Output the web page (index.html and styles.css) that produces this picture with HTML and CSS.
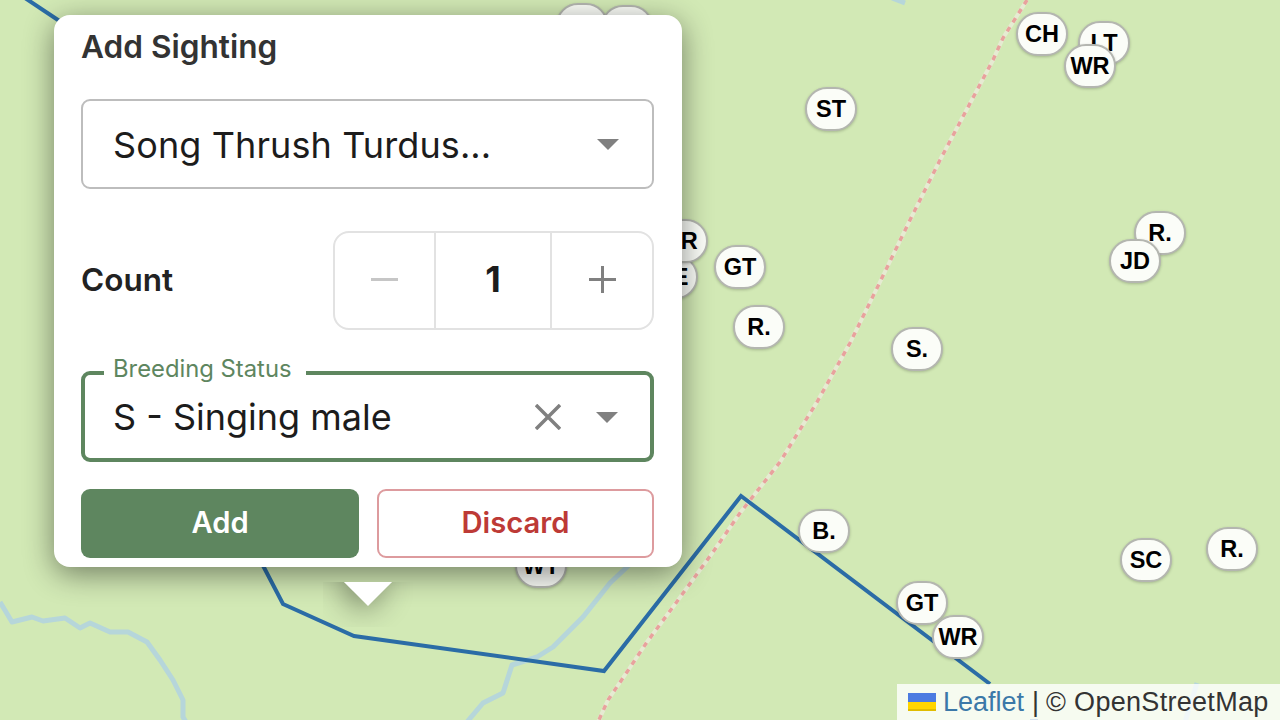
FILE: index.html
```html
<!DOCTYPE html>
<html lang="en">
<head>
<meta charset="utf-8">
<title>Add Sighting</title>
<link rel="stylesheet" href="styles.css">
</head>
<body>
<main class="map">
  <svg class="map-lines" viewBox="0 0 1280 720" width="1280" height="720" aria-hidden="true">
    <g class="water">
      <polyline points="0,602 12,622 32,617 43,621 65,618 80,628 90,623 110,632 128,632 147,642 160,660 173,680 183,700 183,717 186,722"/>
      <polyline points="650,545 627,567 610,583 583,617 553,647 537,657 512,665 503,693 483,703 467,722"/>
      <polyline points="1197,683 1185,722"/>
      <polyline points="892,-2 905,3"/>
    </g>
    <g class="track">
      <polyline class="track-base" points="1027,0 1003,38 993,60 940,160 910,220 880,282 850,343 817,402 780,462 740,513 713,552 673,607 647,642 627,672 608,700 598,722"/>
      <polyline class="track-dots" points="1027,0 1003,38 993,60 940,160 910,220 880,282 850,343 817,402 780,462 740,513 713,552 673,607 647,642 627,672 608,700 598,722"/>
    </g>
    <polyline class="route" points="25,-2 70,28"/>
    <polyline class="route" points="258,556 283,604 354,636 604,671 741,496 990,684"/>
    <polyline class="route" points="1030,721 1038,721"/>
  </svg>

  <span class="pin p-a">&nbsp;</span>
  <span class="pin p-b">&nbsp;</span>
  <span class="pin p-st">ST</span>
  <span class="pin p-ch">CH</span>
  <span class="pin p-lt">LT</span>
  <span class="pin p-wr1">WR</span>
  <span class="pin p-r1">R.</span>
  <span class="pin p-jd">JD</span>
  <span class="pin p-e">RE</span>
  <span class="pin p-r0">TR</span>
  <span class="pin p-gt1">GT</span>
  <span class="pin p-r2">R.</span>
  <span class="pin p-s">S.</span>
  <span class="pin p-b2">B.</span>
  <span class="pin p-gt2">GT</span>
  <span class="pin p-wr2">WR</span>
  <span class="pin p-sc">SC</span>
  <span class="pin p-r3">R.</span>
  <span class="pin p-wt">WT</span>

  <section class="popup">
    <h2 class="title">Add Sighting</h2>
    <div class="select">
      <span class="select-value">Song Thrush Turdus...</span>
      <svg class="caret" viewBox="0 0 22 11" width="22" height="11" aria-hidden="true"><path d="M0 0H22L11 11Z"/></svg>
    </div>
    <div class="count-row">
      <span class="count-label">Count</span>
      <div class="stepper">
        <button class="step step-minus" type="button" aria-label="Decrease">
          <svg viewBox="0 0 27 3" width="27" height="3" aria-hidden="true"><path class="glyph-off" d="M0 1.5H27"/></svg>
        </button>
        <span class="step-value">1</span>
        <button class="step step-plus" type="button" aria-label="Increase">
          <svg viewBox="0 0 27 27" width="27" height="27" aria-hidden="true"><path class="glyph-on" d="M0 13.5H27M13.5 0V27"/></svg>
        </button>
      </div>
    </div>
    <div class="select select-focus">
      <span class="float-label">Breeding Status</span>
      <span class="select-value">S - Singing male</span>
      <svg class="clear" viewBox="0 0 26 26" width="26" height="26" aria-hidden="true"><path d="M1 1L25 25M25 1L1 25"/></svg>
      <svg class="caret" viewBox="0 0 22 11" width="22" height="11" aria-hidden="true"><path d="M0 0H22L11 11Z"/></svg>
    </div>
    <div class="actions">
      <button class="btn btn-add" type="button">Add</button>
      <button class="btn btn-discard" type="button">Discard</button>
    </div>
  </section>
  <div class="tip-wrap"><div class="tip"></div></div>

  <footer class="attribution">
    <svg class="flag" viewBox="0 0 28 18" width="28" height="18" aria-hidden="true">
      <rect width="28" height="9" fill="#4c7be1"/><rect y="9" width="28" height="7" fill="#ffd500"/><rect y="16" width="28" height="2" fill="#e0bc00"/>
    </svg>
    <a class="attr-link">Leaflet</a>
    <span class="attr-sep">|</span>
    <span class="attr-osm">© OpenStreetMap</span>
  </footer>
</main>
</body>
</html>
```
FILE: styles.css
```css
* { box-sizing: border-box; }
html, body { margin: 0; padding: 0; }
body { width: 1280px; height: 720px; overflow: hidden; font-family: "Inter", "Liberation Sans", sans-serif; }

.map { position: relative; width: 1280px; height: 720px; overflow: hidden; background: #d2e9b5; }
.map-lines { position: absolute; left: 0; top: 0; }
.map-lines polyline { fill: none; }
.water polyline { stroke: #b6d6da; stroke-width: 5; stroke-linejoin: round; }
.track-base { stroke: #e6ebd2; stroke-width: 4; }
.track-dots { stroke: #e8a29d; stroke-width: 3.5; stroke-dasharray: 5 5.7; }
.route { stroke: #2b6ca6; stroke-width: 4; stroke-linejoin: miter; }

.pin {
  position: absolute;
  width: 52px;
  height: 44px;
  display: flex;
  align-items: center;
  justify-content: center;
  padding-top: 1px;
  border: 2px solid #b4b6b0;
  border-radius: 22px;
  background: #fbfdf8;
  box-shadow: 0 1px 3px rgba(0, 0, 0, .22);
  color: #000;
  font: 700 23.5px/1 "Liberation Sans", Arial, sans-serif;
  white-space: nowrap;
}
.p-a { left: 556px; top: 3px; }
.p-b { left: 601px; top: 5px; }
.p-st { left: 805px; top: 87px; }
.p-ch { left: 1016px; top: 12px; }
.p-lt { left: 1078px; top: 21px; }
.p-wr1 { left: 1064px; top: 44px; }
.p-r1 { left: 1134px; top: 211px; }
.p-jd { left: 1109px; top: 239px; }
.p-e { left: 646px; top: 255px; }
.p-r0 { left: 656px; top: 219px; }
.p-gt1 { left: 714px; top: 245px; }
.p-r2 { left: 733px; top: 305px; }
.p-s { left: 891px; top: 327px; }
.p-b2 { left: 798px; top: 509px; }
.p-gt2 { left: 896px; top: 581px; }
.p-wr2 { left: 932px; top: 615px; }
.p-sc { left: 1120px; top: 538px; }
.p-r3 { left: 1206px; top: 527px; }
.p-wt { left: 515px; top: 544px; }

.popup {
  position: absolute;
  left: 54px;
  top: 15px;
  width: 628px;
  height: 552px;
  padding: 0 28px 0 27px;
  display: flex;
  flex-direction: column;
  background: #fff;
  border-radius: 16px;
  box-shadow: 0 7px 30px rgba(0, 0, 0, .46);
}
.title {
  margin: 9px 0 29px;
  font-size: 31.6px;
  line-height: 46px;
  font-weight: 600;
  color: #333;
}
.select {
  position: relative;
  height: 90px;
  display: flex;
  align-items: center;
  padding: 0 33px 0 30px;
  border: 2px solid #bdbdbd;
  border-radius: 9px;
  color: #1c1c1c;
  font-size: 36px;
}
.select-value { flex: 1; white-space: nowrap; letter-spacing: .1px; margin-top: 1px; }
.caret { fill: #808080; flex: none; margin-top: 1px; }
.clear { flex: none; margin-right: 35px; fill: none; stroke: #808080; stroke-width: 3.5; }

.count-row {
  margin-top: 42px;
  display: flex;
  align-items: center;
  justify-content: space-between;
}
.count-label { font-size: 31.5px; font-weight: 600; color: #222; margin-top: -2px; }
.stepper {
  width: 321px;
  height: 99px;
  display: flex;
  border: 2px solid #e2e2e2;
  border-radius: 16px;
}
.step {
  display: flex;
  align-items: center;
  justify-content: center;
  padding: 0 0 2px;
  border: 0;
  background: none;
}
.step-minus { width: 101px; border-right: 2px solid #e2e2e2; }
.step-plus { flex: 1; border-left: 2px solid #e2e2e2; }
.step-value {
  width: 114px;
  display: flex;
  align-items: center;
  justify-content: center;
  padding-bottom: 3px;
  font-size: 36px;
  font-weight: 700;
  color: #1c1c1c;
}
.glyph-off { fill: none; stroke: #c6c6c6; stroke-width: 3; }
.glyph-on { fill: none; stroke: #808080; stroke-width: 3; }

.select-focus {
  margin-top: 41px;
  height: 91px;
  padding-right: 32px;
  padding-left: 28px;
  border: 4px solid #5e865f;
  border-radius: 9px;
}
.select-focus .select-value { margin-top: 0; letter-spacing: 0; }
.float-label {
  position: absolute;
  left: 19px;
  top: -21px;
  height: 27px;
  padding: 0 14px 0 9px;
  background: #fff;
  color: #5e865f;
  font-size: 23.8px;
  line-height: 30px;
}

.actions { margin-top: 27px; display: grid; grid-template-columns: 278px 277px; column-gap: 18px; }
.btn {
  height: 69px;
  padding: 0 0 2px;
  border-radius: 9px;
  font-family: inherit;
  font-size: 29.2px;
  font-weight: 600;
}
.btn-add { border: 0; background: #5e865f; color: #fff; }
.btn-discard { border: 2px solid #dd9b9e; background: #fff; color: #bd3a36; }

.tip-wrap {
  position: absolute;
  left: 323px;
  top: 582px;
  width: 90px;
  height: 45px;
  overflow: hidden;
}
.tip {
  width: 34px;
  height: 34px;
  margin: -17px auto 0;
  background: #fff;
  transform: rotate(45deg);
  box-shadow: 0 7px 30px rgba(0, 0, 0, .46);
}

.attribution {
  position: absolute;
  right: 0;
  bottom: 0;
  width: 383px;
  height: 36px;
  display: flex;
  align-items: center;
  gap: 8px;
  padding-left: 11px;
  background: rgba(255, 255, 255, .8);
  color: #333;
  font: 27px/36px "Liberation Sans", Arial, sans-serif;
  white-space: nowrap;
}
.flag { flex: none; }
.attr-link { color: #3b78a8; margin-left: -1px; }
.attr-osm { letter-spacing: .3px; margin-left: -1px; }
```
